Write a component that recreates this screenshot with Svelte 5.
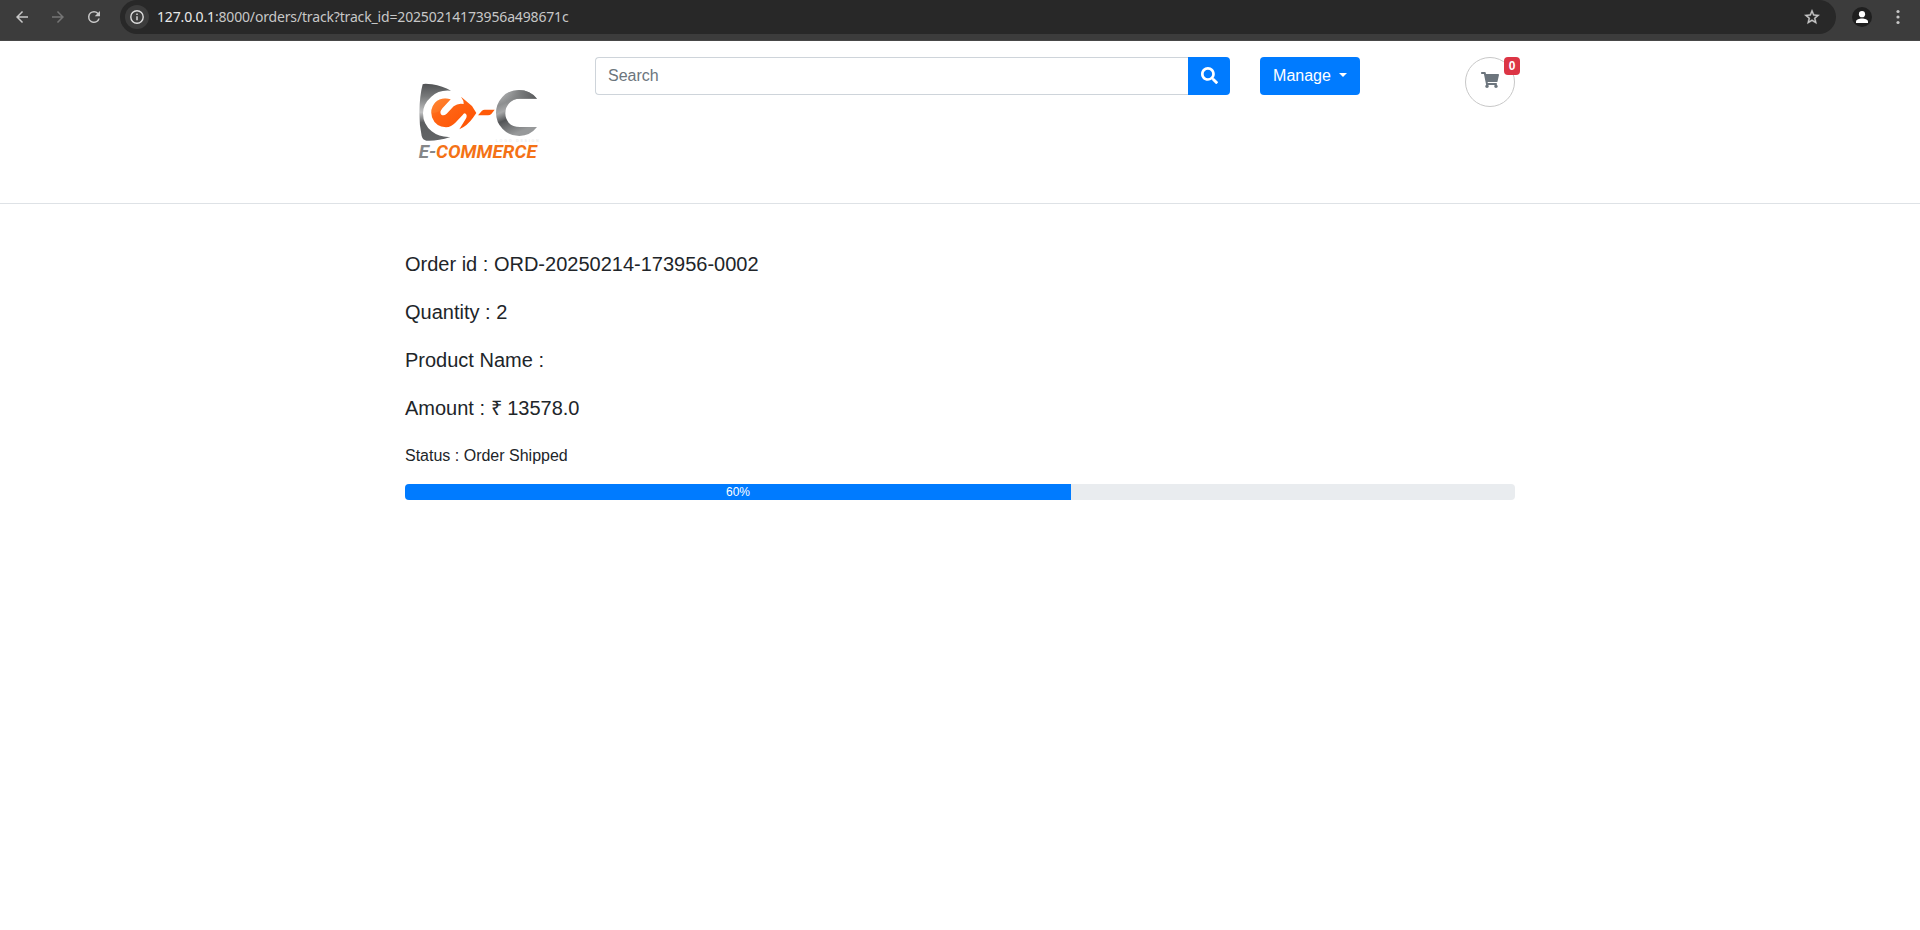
<script>
  const url = { host: '127.0.0.1', rest: ':8000/orders/track?track_id=20250214173956a498671c' };
  const details = [
    'Order id : ORD-20250214-173956-0002',
    'Quantity : 2',
    'Product Name :',
    'Amount : ₹ 13578.0'
  ];
  const progress = 60;
</script>

<div class="toolbar">
  <svg class="nav back" viewBox="0 0 24 24"><path d="M20 11H7.83l5.59-5.59L12 4l-8 8 8 8 1.41-1.41L7.83 13H20z" /></svg>
  <svg class="nav forward" viewBox="0 0 24 24"><path d="M4 11h12.17l-5.59-5.59L12 4l8 8-8 8-1.41-1.41L16.17 13H4z" /></svg>
  <svg class="nav reload" viewBox="0 0 24 24"><path d="M17.65 6.35A7.96 7.96 0 0 0 12 4a8 8 0 1 0 7.73 10h-2.08A6 6 0 1 1 12 6c1.66 0 3.14.69 4.22 1.78L13 11h7V4z" /></svg>
  <div class="omnibox">
    <span class="info">
      <svg viewBox="0 0 16 16"><circle cx="8" cy="8" r="6.2" /><path d="M8 7.2v4M8 4.6v1.5" /></svg>
    </span>
    <span class="url"><b>{url.host}</b>{url.rest}</span>
    <svg class="star" viewBox="0 0 24 24"><path d="m22 9.24-7.19-.62L12 2 9.19 8.63 2 9.24l5.46 4.73L5.82 21 12 17.27 18.18 21l-1.63-7.03zM12 15.4l-3.76 2.27 1-4.28-3.32-2.88 4.38-.38L12 6.1l1.71 4.04 4.38.38-3.32 2.88 1 4.28z" /></svg>
  </div>
  <svg class="profile" viewBox="0 0 20 20"><circle cx="10" cy="10" r="10" fill="#1f1f1f" /><circle cx="10" cy="7.2" r="3.1" /><path d="M4 16v-1.6c0-2 3.3-3 6-3s6 1 6 3V16z" /></svg>
  <svg class="more" viewBox="0 0 4 16"><circle cx="2" cy="2.5" r="1.6" /><circle cx="2" cy="8" r="1.6" /><circle cx="2" cy="13.5" r="1.6" /></svg>
</div>

<header>
  <div class="container head">
    <svg class="logo" viewBox="0 0 480 300" role="img" aria-label="E-Commerce">
      <defs>
        <linearGradient id="shield" x1="0" y1="0" x2="0" y2="1">
          <stop offset="0" stop-color="#505254" /><stop offset=".22" stop-color="#77797a" />
          <stop offset=".5" stop-color="#c2c3c4" /><stop offset=".68" stop-color="#5c5e60" /><stop offset="1" stop-color="#626466" />
        </linearGradient>
        <linearGradient id="ring" x1="0" y1=".1" x2=".35" y2="1">
          <stop offset="0" stop-color="#b4b5b6" /><stop offset=".25" stop-color="#8d8f90" />
          <stop offset=".42" stop-color="#a8a9aa" /><stop offset=".62" stop-color="#535557" /><stop offset="1" stop-color="#97999a" />
        </linearGradient>
        <linearGradient id="ringTop" x1="0" y1="0" x2="1" y2="0">
          <stop offset="0" stop-color="#8b8d8e" stop-opacity="0" /><stop offset=".55" stop-color="#77797a" /><stop offset="1" stop-color="#58595b" />
        </linearGradient>
        <linearGradient id="orange" x1="0" y1="0" x2="1" y2="1">
          <stop offset="0" stop-color="#ff8a32" /><stop offset=".35" stop-color="#ff6515" /><stop offset="1" stop-color="#ff5000" />
        </linearGradient>
      </defs>
      <path fill="url(#shield)" d="M68 43Q72 40 96 43Q128 48 153 62Q117 58 94 80Q69 102 69 130Q69 163 95 184Q119 203 151 201Q111 214 79 212Q68 210 65 198Q58 166 58 128Q59 76 68 43Z" />
      <path fill="url(#orange)" d="M152 88Q124 80 105 98Q89 117 96 142Q107 171 138 172Q154 170 166 158L188 135Q192 128 197 131Q203 136 197 147L178 178Q203 166 219 143L229 129L216 108L183 80Q192 92 191 102Q174 98 161 109L140 131Q131 139 124 134Q117 127 127 115Z" />
      <path fill="#ff8a38" d="M152 88Q124 80 105 98Q93 112 94 130Q110 128 121 122L127 115Z" opacity=".35" />
      <path fill="#ff5a08" d="M234 136L246 122Q249 119 254 119H284L274 132Q270 136 264 136Z" />
      <path fill="url(#ring)" d="M411 86Q390 60 357 60Q326 60 307 81Q288 102 288 129Q288 157 308 177Q328 198 358 198Q391 197 411 171H360Q338 171 326 158Q316 146 316 130Q316 112 328 99Q340 86 360 86Z" />
      <path fill="url(#ringTop)" d="M411 86Q390 60 357 60Q326 60 307 81L322 107Q334 86 360 86Z" />
      <text class="tagline" x="287" y="215" textLength="129">LOGO DESIGN</text>
      <text class="brand" x="56" y="265" textLength="354" lengthAdjust="spacingAndGlyphs"><tspan fill="#858789">E-</tspan><tspan fill="#f47216">COMMERCE</tspan></text>
    </svg>

    <form class="search" onsubmit={(e) => e.preventDefault()}>
      <input type="text" placeholder="Search" />
      <button type="submit" aria-label="Search">
        <svg viewBox="0 0 512 512"><path d="M505 442.7 405.300 343c-4.500-4.500-10.600-7-17-7H372c27.600-35.300 44-79.700 44-128C416 93.100 322.900 0 208 0S0 93.100 0 208s93.100 208 208 208c48.300 0 92.700-16.400 128-44v16.300c0 6.400 2.500 12.500 7 17l99.700 99.700c9.400 9.400 24.600 9.400 33.900 0l28.300-28.300c9.400-9.400 9.400-24.600.1-34zM208 336c-70.700 0-128-57.200-128-128 0-70.700 57.200-128 128-128 70.700 0 128 57.200 128 128 0 70.700-57.200 128-128 128z" /></svg>
      </button>
    </form>

    <button class="manage">Manage<span class="caret"></span></button>

    <div class="cart">
      <svg viewBox="0 0 576 512"><path d="M528.12 301.319l47.273-208C578.806 78.301 567.391 64 551.990 64H159.208l-9.166-44.810C147.758 8.021 137.930 0 126.529 0H24C10.745 0 0 10.745 0 24v16c0 13.255 10.745 24 24 24h69.883l70.248 343.435C147.325 417.100 136 435.222 136 456c0 30.928 25.072 56 56 56s56-25.072 56-56c0-15.674-6.447-29.835-16.824-40h209.647C430.447 426.165 424 440.326 424 456c0 30.928 25.072 56 56 56s56-25.072 56-56c0-22.172-12.888-41.332-31.579-50.405l5.517-24.276c3.413-15.018-8.002-29.319-23.403-29.319H218.117l-6.545-32h293.145c11.206 0 20.920-7.754 23.403-18.681z" /></svg>
      <span class="badge">0</span>
    </div>
  </div>
</header>

<main class="container">
  {#each details as line}
    <h5>{line}</h5>
  {/each}
  <p>Status : Order Shipped</p>
  <div class="progress"><div class="bar" style="width: {progress}%">{progress}%</div></div>
</main>

<style>
  :global(body) {
    margin: 0;
    background: #fff;
    color: #212529;
    font: 16px/24px 'Liberation Sans', sans-serif;
  }
  * { box-sizing: border-box; }
  svg { display: block; flex: none; }

  .toolbar {
    display: flex;
    height: 41px;
    padding-left: 13px;
    background: #3c3c3c;
    border-bottom: 1px solid #474747;
  }
  .nav { width: 18px; height: 18px; margin: 8px 18px 0 0; fill: #c7c7c7; }
  .forward { fill: #757575; }
  .reload { margin-right: 17px; }
  .omnibox {
    display: flex;
    align-items: center;
    width: 1716px;
    height: 34px;
    border-radius: 17px;
    background: #282828;
    padding: 0 15px 0 5px;
  }
  .info {
    display: grid;
    place-items: center;
    width: 24px;
    height: 24px;
    border-radius: 50%;
    background: #3c3c3c;
  }
  .info svg { width: 16px; height: 16px; fill: none; stroke: #dedede; stroke-width: 1.4; }
  .url {
    margin-left: 8px;
    flex: 1;
    font: 14px/20px 'Noto Sans', sans-serif;
    letter-spacing: -0.16px;
    color: #c7c7c7;
    white-space: nowrap;
  }
  .url b { font-weight: 400; color: #e8e8e8; }
  .star { width: 18px; height: 18px; fill: #c7c7c7; stroke: #c7c7c7; stroke-width: 0.5; }
  .profile { width: 20px; height: 20px; margin: 7px 0 0 16px; fill: #fff; }
  .more { width: 4px; height: 16px; margin: 9px 0 0 24px; fill: #c7c7c7; }

  .container { width: 1110px; margin: 0 auto; }
  header { height: 163px; border-bottom: 1px solid #dee2e6; }
  .head { display: flex; align-items: flex-start; padding-top: 16px; }
  .logo { width: 160px; height: 100px; margin: 13px 35px 0 -5px; }
  .brand { font: italic 700 54px Roboto, sans-serif; }
  .tagline { font: 700 11px 'Liberation Sans', sans-serif; fill: #ececec; }

  .search { display: flex; width: 635px; height: 38px; }
  input {
    flex: 1;
    min-width: 0;
    padding: 6px 12px;
    border: 1px solid #ced4da;
    border-right: 0;
    border-radius: 4px 0 0 4px;
    font: inherit;
    outline: 0;
  }
  input::placeholder { color: #6c757d; opacity: 1; }
  button { border: 0; background: #007bff; color: #fff; font: inherit; }
  .search button { display: grid; place-items: center; width: 42px; padding: 0; border-radius: 0 4px 4px 0; }
  .search button svg { width: 17px; height: 17px; margin-top: -2px; fill: #fff; }
  .manage {
    display: flex;
    align-items: center;
    justify-content: center;
    width: 100px;
    height: 38px;
    margin-left: 30px;
    padding: 0;
    border-radius: 4px;
  }
  .caret { margin: -2px 0 0 8px; border: 4.8px solid transparent; border-top-color: #fff; border-bottom: 0; }
  .cart {
    position: relative;
    display: grid;
    place-items: center;
    width: 50px;
    height: 50px;
    margin-left: auto;
    border: 1px solid #c8c8c8;
    border-radius: 50%;
  }
  .cart svg { width: 18px; height: 16px; margin-top: -4px; fill: #6c757d; }
  .badge {
    position: absolute;
    top: -1px;
    right: -6px;
    width: 16px;
    height: 18px;
    border-radius: 4px;
    background: #dc3545;
    color: #fff;
    font-size: 12px;
    font-weight: 700;
    line-height: 18px;
    text-align: center;
  }

  main { padding-top: 48px; }
  h5 { margin: 0 0 24px; font-size: 20px; font-weight: 400; line-height: 24px; }
  p { margin: 0 0 16px; }
  .progress { height: 16px; overflow: hidden; border-radius: 4px; background: #e9ecef; font-size: 12px; line-height: 16px; }
  .bar { height: 100%; background: #007bff; color: #fff; text-align: center; }
</style>
